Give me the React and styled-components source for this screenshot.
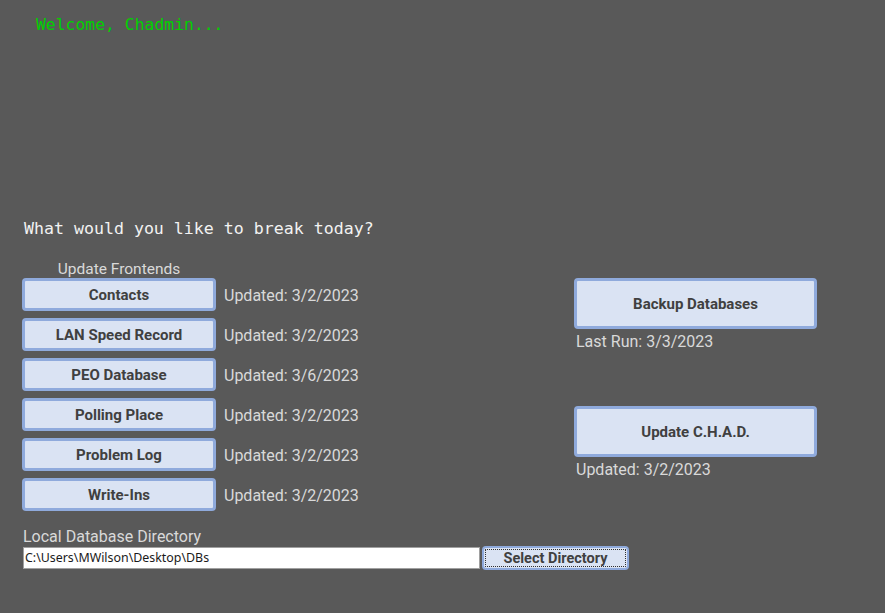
import React from "react";
import styled, { createGlobalStyle } from "styled-components";

const Global = createGlobalStyle`
  html, body { margin: 0; padding: 0; background: #595959; }
  body { width: 885px; height: 613px; overflow: hidden; }
`;

const Page = styled.div`
  width: 885px;
  height: 613px;
  box-sizing: border-box;
  padding: 15px 0 0 22px;
  background: #595959;
  display: flex;
  flex-direction: column;
  font-family: Roboto, "Liberation Sans", sans-serif;
`;

const Welcome = styled.div`
  font-family: "DejaVu Sans Mono", "Liberation Mono", monospace;
  font-size: 16.4px;
  line-height: 20px;
  color: #00d000;
  margin-left: 14px;
`;

const Question = styled.div`
  font-family: "DejaVu Sans Mono", "Liberation Mono", monospace;
  font-size: 16.6px;
  line-height: 20px;
  color: #f2f2f2;
  margin-top: 184px;
  margin-left: 2px;
`;

const Columns = styled.div`
  display: flex;
  margin-top: 21px;
`;

const LeftCol = styled.div`
  display: flex;
  flex-direction: column;
  width: 552px;
  flex-shrink: 0;
`;

const RightCol = styled.div`
  display: flex;
  flex-direction: column;
  padding-top: 18px;
`;

const GroupLabel = styled.div`
  width: 194px;
  text-align: center;
  font-size: 15.5px;
  line-height: 18px;
  color: #d9d9d9;
`;

const Rows = styled.div`
  display: flex;
  flex-direction: column;
  gap: 7px;
`;

const Row = styled.div`
  display: flex;
  align-items: center;
  gap: 8px;
`;

const Btn = styled.button`
  box-sizing: border-box;
  flex-shrink: 0;
  width: ${(p) => p.$w}px;
  height: ${(p) => p.$h}px;
  background: #dae3f3;
  border: 3px solid #8faadc;
  border-radius: 4px;
  color: #404040;
  font-family: Roboto, "Liberation Sans", sans-serif;
  font-weight: 700;
  font-size: 15px;
  padding: 0;
  display: flex;
  align-items: center;
  justify-content: center;
  cursor: pointer;
`;

const Status = styled.div`
  font-size: 16px;
  line-height: 18px;
  color: #d9d9d9;
  padding-top: 3px;
`;

const SideStatus = styled(Status)`
  margin-left: 2px;
  padding-top: 0;
  margin-top: 4px;
`;

const Spacer = styled.div`
  height: ${(p) => p.$h}px;
`;

const DirLabel = styled.div`
  margin-top: 17px;
  margin-left: 1px;
  font-size: 16px;
  line-height: 18px;
  color: #d9d9d9;
`;

const DirRow = styled.div`
  display: flex;
  align-items: center;
  gap: 2px;
  margin-left: 1px;
  width: 620px;
`;

const DirInput = styled.div`
  box-sizing: border-box;
  flex-shrink: 0;
  width: 457px;
  height: 22px;
  background: #ffffff;
  border: 1px solid #a0a0a0;
  padding: 0 0 0 1px;
  font-family: "Noto Sans", "Open Sans", sans-serif;
  font-size: 12.4px;
  line-height: 20px;
  color: #1a1a1a;
  white-space: nowrap;
`;

const SelectBtn = styled.button`
  box-sizing: border-box;
  flex-shrink: 0;
  width: 147px;
  height: 24px;
  background: #dae3f3;
  border: 2px solid #8faadc;
  border-radius: 4px;
  color: #404040;
  font-family: Roboto, "Liberation Sans", sans-serif;
  font-weight: 700;
  font-size: 14.5px;
  padding: 0;
  outline: 1px dotted #303030;
  outline-offset: -4px;
  display: flex;
  align-items: center;
  justify-content: center;
`;

const frontends = [
  ["Contacts", "3/2/2023"],
  ["LAN Speed Record", "3/2/2023"],
  ["PEO Database", "3/6/2023"],
  ["Polling Place", "3/2/2023"],
  ["Problem Log", "3/2/2023"],
  ["Write-Ins", "3/2/2023"],
];

export default function App() {
  return (
    <Page>
      <Global />
      <Welcome>Welcome, Chadmin...</Welcome>
      <Question>What would you like to break today?</Question>
      <Columns>
        <LeftCol>
          <GroupLabel>Update Frontends</GroupLabel>
          <Rows>
            {frontends.map(([name, date]) => (
              <Row key={name}>
                <Btn $w={194} $h={33}>{name}</Btn>
                <Status>Updated: {date}</Status>
              </Row>
            ))}
          </Rows>
          <DirLabel>Local Database Directory</DirLabel>
          <DirRow>
            <DirInput>C:\Users\MWilson\Desktop\DBs</DirInput>
            <SelectBtn>Select Directory</SelectBtn>
          </DirRow>
        </LeftCol>
        <RightCol>
          <Btn $w={243} $h={51}>Backup Databases</Btn>
          <SideStatus>Last Run: 3/3/2023</SideStatus>
          <Spacer $h={55} />
          <Btn $w={243} $h={51}>Update C.H.A.D.</Btn>
          <SideStatus>Updated: 3/2/2023</SideStatus>
        </RightCol>
      </Columns>
    </Page>
  );
}
